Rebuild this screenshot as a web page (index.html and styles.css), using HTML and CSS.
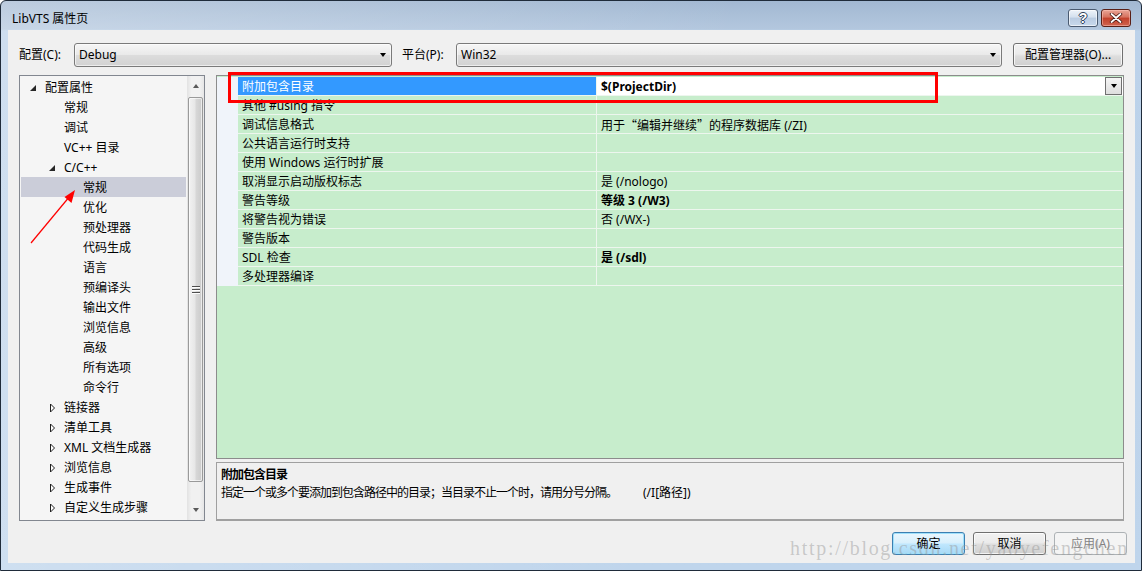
FILE: index.html
```html
<!DOCTYPE html>
<html lang="zh-CN">
<head>
<meta charset="utf-8">
<title>LibVTS 属性页</title>
<link rel="stylesheet" href="styles.css">
</head>
<body>
<div class="window">
  <div class="titlebar">
    <div class="title">LibVTS 属性页</div>
    <div class="caption-btns">
      <div class="cbtn help"><span class="q">?</span></div>
      <div class="cbtn close">
        <svg width="14" height="10" viewBox="0 0 14 10"><path d="M2.5 1 L11.5 9 M11.5 1 L2.5 9" stroke="#43150f" stroke-width="3.4" stroke-linecap="round"/><path d="M2.5 1 L11.5 9 M11.5 1 L2.5 9" stroke="#fff" stroke-width="1.8" stroke-linecap="round"/></svg>
      </div>
    </div>
  </div>
  <div class="client">
    <div class="toprow">
      <span class="lbl lbl-conf">配置(C):</span>
      <div class="combo combo-conf"><span>Debug</span><i class="caret"></i></div>
      <span class="lbl lbl-plat">平台(P):</span>
      <div class="combo combo-plat"><span>Win32</span><i class="caret"></i></div>
      <div class="btn btn-mgr">配置管理器(O)...</div>
    </div>
    <div class="main">
      <div class="tree">
        <div class="tree-list">
          <div class="tnode l1"><svg class="tw" viewBox="0 0 12 12"><path d="M3 10 L9 10 L9 4 Z" fill="#262626"/></svg>配置属性</div>
          <div class="tnode l2"><span class="tw"></span>常规</div>
          <div class="tnode l2"><span class="tw"></span>调试</div>
          <div class="tnode l2"><span class="tw"></span>VC++ 目录</div>
          <div class="tnode l2"><svg class="tw" viewBox="0 0 12 12"><path d="M3 10 L9 10 L9 4 Z" fill="#262626"/></svg>C/C++</div>
          <div class="tnode l3 sel"><span class="tw"></span>常规</div>
          <div class="tnode l3"><span class="tw"></span>优化</div>
          <div class="tnode l3"><span class="tw"></span>预处理器</div>
          <div class="tnode l3"><span class="tw"></span>代码生成</div>
          <div class="tnode l3"><span class="tw"></span>语言</div>
          <div class="tnode l3"><span class="tw"></span>预编译头</div>
          <div class="tnode l3"><span class="tw"></span>输出文件</div>
          <div class="tnode l3"><span class="tw"></span>浏览信息</div>
          <div class="tnode l3"><span class="tw"></span>高级</div>
          <div class="tnode l3"><span class="tw"></span>所有选项</div>
          <div class="tnode l3"><span class="tw"></span>命令行</div>
          <div class="tnode l2"><svg class="tw" viewBox="0 0 12 12"><path d="M4.5 3 L8.5 7 L4.5 11 Z" fill="#fff" stroke="#1e1e1e" stroke-width="1"/></svg>链接器</div>
          <div class="tnode l2"><svg class="tw" viewBox="0 0 12 12"><path d="M4.5 3 L8.5 7 L4.5 11 Z" fill="#fff" stroke="#1e1e1e" stroke-width="1"/></svg>清单工具</div>
          <div class="tnode l2"><svg class="tw" viewBox="0 0 12 12"><path d="M4.5 3 L8.5 7 L4.5 11 Z" fill="#fff" stroke="#1e1e1e" stroke-width="1"/></svg>XML 文档生成器</div>
          <div class="tnode l2"><svg class="tw" viewBox="0 0 12 12"><path d="M4.5 3 L8.5 7 L4.5 11 Z" fill="#fff" stroke="#1e1e1e" stroke-width="1"/></svg>浏览信息</div>
          <div class="tnode l2"><svg class="tw" viewBox="0 0 12 12"><path d="M4.5 3 L8.5 7 L4.5 11 Z" fill="#fff" stroke="#1e1e1e" stroke-width="1"/></svg>生成事件</div>
          <div class="tnode l2"><svg class="tw" viewBox="0 0 12 12"><path d="M4.5 3 L8.5 7 L4.5 11 Z" fill="#fff" stroke="#1e1e1e" stroke-width="1"/></svg>自定义生成步骤</div>
        </div>
        <div class="vscroll">
          <div class="sb-btn"><i class="tri-up"></i></div>
          <div class="sb-thumb"><div class="grip"><i></i><i></i><i></i></div></div>
          <div class="sb-space"></div>
          <div class="sb-btn"><i class="tri-down"></i></div>
        </div>
      </div>
      <div class="right">
        <div class="grid">
          <div class="prow sel"><div class="pg"></div><div class="pn">附加包含目录</div><div class="pv"><span>$(ProjectDir)</span><div class="dd"><i class="caret"></i></div></div></div>
          <div class="prow"><div class="pg"></div><div class="pn">其他 #using 指令</div><div class="pv"></div></div>
          <div class="prow"><div class="pg"></div><div class="pn">调试信息格式</div><div class="pv">用于<span class="cjk">“</span>编辑并继续<span class="cjk">”</span>的程序数据库 (/ZI)</div></div>
          <div class="prow"><div class="pg"></div><div class="pn">公共语言运行时支持</div><div class="pv"></div></div>
          <div class="prow"><div class="pg"></div><div class="pn">使用 Windows 运行时扩展</div><div class="pv"></div></div>
          <div class="prow"><div class="pg"></div><div class="pn">取消显示启动版权标志</div><div class="pv">是 (/nologo)</div></div>
          <div class="prow"><div class="pg"></div><div class="pn">警告等级</div><div class="pv b">等级 3 (/W3)</div></div>
          <div class="prow"><div class="pg"></div><div class="pn">将警告视为错误</div><div class="pv">否 (/WX-)</div></div>
          <div class="prow"><div class="pg"></div><div class="pn">警告版本</div><div class="pv"></div></div>
          <div class="prow"><div class="pg"></div><div class="pn">SDL 检查</div><div class="pv b">是 (/sdl)</div></div>
          <div class="prow"><div class="pg"></div><div class="pn">多处理器编译</div><div class="pv"></div></div>
        </div>
        <div class="desc">
          <div class="desc-title">附加包含目录</div>
          <div class="desc-text">指定一个或多个要添加到包含路径中的目录；当目录不止一个时，请用分号分隔。<span class="desc-flag">(/I[路径])</span></div>
        </div>
      </div>
    </div>
    <div class="btnrow">
      <div class="btn dlgbtn default">确定</div>
      <div class="btn dlgbtn">取消</div>
      <div class="btn dlgbtn disabled">应用(A)</div>
    </div>
  </div>

  <div class="redbox"></div>
  <svg class="annot" width="1142" height="571" viewBox="0 0 1142 571">
    <path d="M31 243 L70 196" stroke="#ff0000" stroke-width="1.2" fill="none"/>
    <path d="M75 190 L64.5 197 L71.5 203 Z" fill="#ff0000"/>
  </svg>
  <div class="watermark">http://blog.csdn.net/yaoyefengchen</div>
</div>
</body>
</html>
```
FILE: styles.css
```css
* { box-sizing: border-box; margin: 0; padding: 0; }
html, body { width: 1142px; height: 571px; overflow: hidden; }
body {
  font-family: "Noto Sans", "Noto Sans CJK SC", sans-serif;
  font-size: 12px;
  color: #000;
  background: #fff;
}
.cjk { font-family: "Noto Sans CJK SC", sans-serif; }

.window {
  position: relative;
  width: 1142px;
  height: 571px;
  display: flex;
  flex-direction: column;
  border: 1px solid #1f2b3a;
  border-radius: 6px 6px 0 0;
  padding: 0 6px 7px 7px;
  background:
    linear-gradient(100deg, rgba(255,255,255,0.28) 0, rgba(255,255,255,0.12) 35%, rgba(255,255,255,0) 60%),
    linear-gradient(#a2b8d2 0, #b3c7de 28px, #bcd2ea 30px, #bfd5ec 100%);
}

.titlebar {
  flex: none;
  height: 29px;
  display: flex;
  justify-content: space-between;
  align-items: flex-start;
}
.title {
  padding: 10px 0 0 4px;
  line-height: 15px;
  font-size: 12px;
  color: #000;
}
.caption-btns {
  display: flex;
  gap: 3px;
  padding-top: 8px;
  margin-right: 4px;
}
.cbtn {
  width: 30px;
  height: 18px;
  border: 1px solid #4a5a70;
  border-radius: 3px;
  display: flex;
  align-items: center;
  justify-content: center;
}
.help {
  background: linear-gradient(#eef3f9 0, #d4e0ee 45%, #b9cbe1 50%, #c8d9ec 100%);
  box-shadow: inset 0 0 0 1px rgba(255,255,255,0.6);
}
.q {
  font-family: "Liberation Sans", sans-serif;
  font-weight: bold;
  font-size: 14px;
  line-height: 14px;
  color: #fff;
  text-shadow: 1px 0 0 #2f4058, -1px 0 0 #2f4058, 0 1px 0 #2f4058, 0 -1px 0 #2f4058;
}
.close {
  border-color: #5a1f16;
  background: linear-gradient(#e9a596 0, #d6715e 45%, #c2402b 50%, #d06450 100%);
  box-shadow: inset 0 0 0 1px rgba(255,200,190,0.5);
}

.client {
  flex: 1;
  background: #f0f0f0;
  display: flex;
  flex-direction: column;
  padding: 13px 8px 0 11px;
}

.toprow {
  flex: none;
  display: flex;
  align-items: center;
  height: 24px;
}
.lbl { line-height: 16px; white-space: nowrap; }
.lbl-conf { width: 55px; }
.lbl-plat { width: 54px; margin-left: 10px; }

.combo {
  height: 24px;
  border: 1px solid #7a7a7a;
  border-radius: 3px;
  background: linear-gradient(#f6f6f6, #e9e9e9 50%, #dcdcdc 52%, #d2d2d2);
  box-shadow: inset 0 0 0 1px rgba(255,255,255,0.6);
  display: flex;
  align-items: center;
  justify-content: space-between;
  padding: 0 5px 0 4px;
  line-height: 16px;
}
.combo-conf { width: 318px; }
.combo-plat { width: 546px; }

.caret {
  display: block;
  width: 0;
  height: 0;
  border-left: 3.5px solid transparent;
  border-right: 3.5px solid transparent;
  border-top: 4px solid #000;
}

.btn {
  display: flex;
  align-items: center;
  justify-content: center;
  border: 1px solid #707070;
  border-radius: 3px;
  background: linear-gradient(#f2f2f2, #ebebeb 45%, #dddddd 55%, #cfcfcf);
  box-shadow: inset 0 0 0 1px rgba(255,255,255,0.75);
  line-height: 16px;
  white-space: nowrap;
}
.btn-mgr { width: 110px; height: 24px; margin-left: 11px; }

.main {
  flex: none;
  display: flex;
  height: 446px;
  margin-top: 8px;
}

.tree {
  width: 186px;
  border: 1px solid #828790;
  background: #f5f5f5;
  display: flex;
}
.tree-list { flex: 1; padding-top: 1px; }
.tnode {
  height: 20px;
  display: flex;
  align-items: center;
  margin: 0 1px;
  padding-top: 2px;
  line-height: 18px;
  white-space: nowrap;
}
.tnode .tw { margin-top: -2px; }
.tnode.sel { background: #cbcdd9; }
.tw { display: block; width: 12px; height: 12px; margin-right: 6px; flex: none; }
.l1 { padding-left: 6px; }
.l2 { padding-left: 25px; }
.l3 { padding-left: 44px; }

.vscroll {
  width: 17px;
  display: flex;
  flex-direction: column;
  background: linear-gradient(to right, #e2e2e2, #f1f1f1 25%, #f1f1f1 75%, #e6e6e6);
}
.sb-btn {
  height: 20px;
  flex: none;
  display: flex;
  align-items: center;
  justify-content: center;
}
.tri-up, .tri-down {
  display: block;
  width: 0;
  height: 0;
  border-left: 3.5px solid transparent;
  border-right: 3.5px solid transparent;
}
.tri-up { border-bottom: 4px solid #5a5a5a; }
.tri-down { border-top: 4px solid #5a5a5a; }
.sb-thumb {
  flex: none;
  height: 385px;
  margin: 1px 1px 0 1px;
  border: 1px solid #9a9a9a;
  border-radius: 2px;
  background: linear-gradient(to right, #f2f2f2, #e7e7e7 45%, #d7d7d7 55%, #cbcbcb);
  box-shadow: inset 0 0 0 1px rgba(255,255,255,0.6);
  display: flex;
  align-items: center;
  justify-content: center;
}
.grip { display: flex; flex-direction: column; gap: 2px; }
.grip i {
  display: block;
  width: 8px;
  height: 1px;
  background: #4e4e4e;
  box-shadow: 0 1px 0 #fdfdfd;
}
.sb-space { flex: 1; }

.right {
  width: 908px;
  margin-left: 11px;
  display: flex;
  flex-direction: column;
}
.grid {
  flex: none;
  height: 384px;
  border: 1px solid #8c8c8c;
  background: #c7edcc;
  padding-top: 1px;
}
.prow { display: flex; height: 19px; }
.pg { width: 21px; flex: none; background: #f0f4fa; }
.pn {
  width: 359px;
  flex: none;
  border-right: 1px solid #edf6ee;
  border-bottom: 1px solid #edf6ee;
  padding: 2px 0 0 4px;
  line-height: 16px;
  white-space: nowrap;
  overflow: hidden;
}
.pv {
  flex: 1;
  border-bottom: 1px solid #edf6ee;
  padding: 2px 0 0 4px;
  line-height: 16px;
  white-space: nowrap;
}
.b { font-weight: bold; }
.prow.sel .pn { background: #3399ff; color: #fff; }
.prow.sel .pv {
  background: #fff;
  font-weight: bold;
  display: flex;
  justify-content: space-between;
  align-items: center;
  padding: 0 1px 0 4px;
}
.prow.sel .pv span { padding-top: 2px; }
.dd {
  width: 17px;
  height: 18px;
  border: 1px solid #707070;
  background: linear-gradient(#f5f5f5, #dedede);
  display: flex;
  align-items: center;
  justify-content: center;
}

.desc {
  flex: none;
  height: 59px;
  margin-top: 3px;
  border: 1px solid #a0a0a0;
  border-bottom-width: 2px;
  background: #f0f0f0;
  padding: 3px 4px 0;
  font-size: 12px;
  letter-spacing: -1px;
}
.desc-title { font-weight: bold; line-height: 18px; }
.desc-text { line-height: 18px; white-space: nowrap; }
.desc-flag { margin-left: 26px; letter-spacing: 0; }

.btnrow {
  flex: none;
  display: flex;
  justify-content: flex-end;
  gap: 8px;
  margin-top: 11px;
}
.dlgbtn { width: 73px; height: 23px; }
.dlgbtn.default {
  border-color: #3c7fb1;
  background: linear-gradient(#eaf6fd, #d9f0fc 45%, #bee6fd 55%, #a7d9f5);
  box-shadow: inset 0 0 0 1px #9fe0fb;
}
.dlgbtn.disabled {
  border-color: #adb2b5;
  background: #f4f4f4;
  color: #838383;
  box-shadow: none;
}

.redbox {
  position: absolute;
  left: 227px;
  top: 71px;
  width: 710px;
  height: 31px;
  border: 3px solid #ff0000;
  pointer-events: none;
}
.annot {
  position: absolute;
  left: -1px;
  top: -1px;
  pointer-events: none;
}
.watermark {
  position: absolute;
  left: 789px;
  top: 537px;
  font-family: "Liberation Serif", serif;
  font-size: 20px;
  line-height: 20px;
  letter-spacing: 1.7px;
  color: rgba(150,150,150,0.45);
  white-space: nowrap;
  pointer-events: none;
}
```
